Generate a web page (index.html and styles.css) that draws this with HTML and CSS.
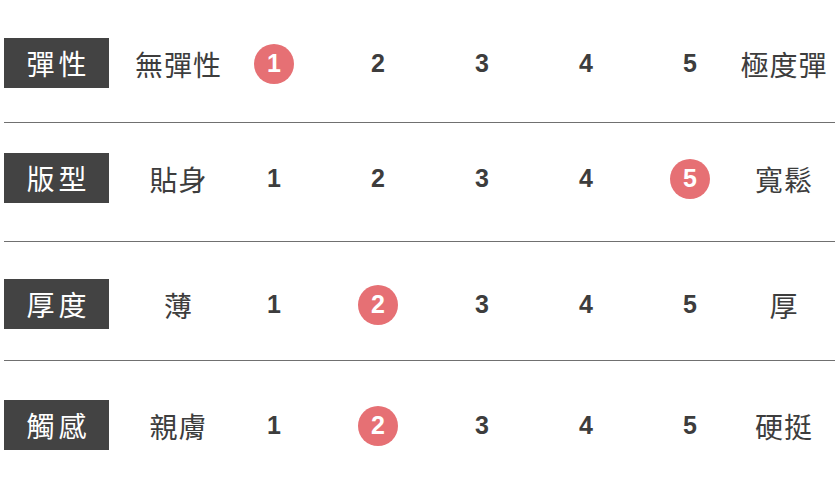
FILE: index.html
```html
<!DOCTYPE html>
<html lang="zh-Hant">
<head>
<meta charset="utf-8">
<title>尺寸感受</title>
<link rel="stylesheet" href="styles.css">
</head>
<body>
<div class="chart">
  <div class="row row-1">
    <div class="label">彈性</div>
    <div class="low">無彈性</div>
    <div class="num"><span class="dot">1</span></div>
    <div class="num">2</div>
    <div class="num">3</div>
    <div class="num">4</div>
    <div class="num">5</div>
    <div class="high">極度彈</div>
  </div>
  <div class="row row-2">
    <div class="label">版型</div>
    <div class="low">貼身</div>
    <div class="num">1</div>
    <div class="num">2</div>
    <div class="num">3</div>
    <div class="num">4</div>
    <div class="num"><span class="dot">5</span></div>
    <div class="high">寬鬆</div>
  </div>
  <div class="row row-3">
    <div class="label">厚度</div>
    <div class="low">薄</div>
    <div class="num">1</div>
    <div class="num"><span class="dot">2</span></div>
    <div class="num">3</div>
    <div class="num">4</div>
    <div class="num">5</div>
    <div class="high">厚</div>
  </div>
  <div class="row row-4">
    <div class="label">觸感</div>
    <div class="low">親膚</div>
    <div class="num">1</div>
    <div class="num"><span class="dot">2</span></div>
    <div class="num">3</div>
    <div class="num">4</div>
    <div class="num">5</div>
    <div class="high">硬挺</div>
  </div>
</div>
</body>
</html>
```
FILE: styles.css
```css
html, body {
  margin: 0;
  padding: 0;
  background: #ffffff;
}

.chart {
  width: 832px;
  margin: 0 0 0 4px;
  font-family: "Noto Sans CJK TC", "Noto Sans", sans-serif;
  color: #3d3d3d;
}

.row {
  display: grid;
  grid-template-columns: 105px 113px repeat(5, 104px) 94px;
  grid-template-rows: 50px;
  align-items: center;
  border-bottom: 1px solid #707070;
  width: 831px;
}

.row-1 { padding-top: 38px; padding-bottom: 34px; }
.row-2 { padding-top: 30px; padding-bottom: 38px; }
.row-3 { padding-top: 37px; padding-bottom: 31px; }
.row-4 { padding-top: 39px; padding-bottom: 0; border-bottom: none; }

.label {
  height: 50px;
  background: #434343;
  color: #ffffff;
  font-size: 28px;
  letter-spacing: 4px;
  padding-left: 4px;
  display: flex;
  align-items: center;
  justify-content: center;
  line-height: 1;
}

.low, .high {
  display: flex;
  justify-content: center;
  white-space: nowrap;
  font-size: 28px;
  line-height: 1;
  letter-spacing: 1px;
  padding-top: 1px;
}

.low { padding-left: 26px; }
.high { padding-right: 10px; }

.num {
  display: flex;
  align-items: center;
  justify-content: center;
  font-family: "Liberation Sans", Arial, sans-serif;
  font-weight: 700;
  font-size: 25px;
  line-height: 1;
  padding-top: 1px;
}

.dot {
  width: 40px;
  height: 40px;
  border-radius: 50%;
  background: #e67074;
  color: #ffffff;
  display: flex;
  align-items: center;
  justify-content: center;
}
```
